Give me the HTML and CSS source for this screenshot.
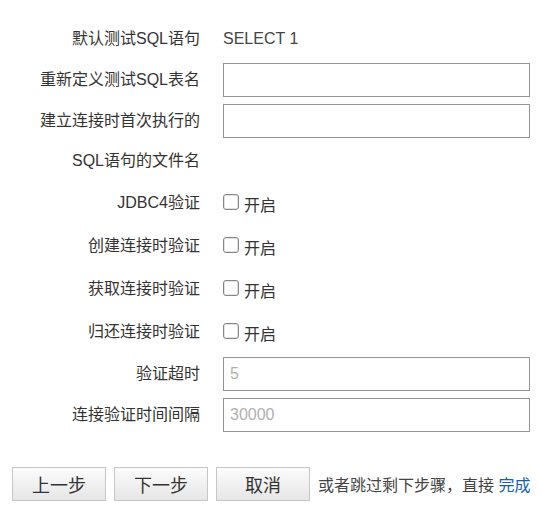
FILE: index.html
```html
<!DOCTYPE html>
<html lang="zh-CN">
<head>
<meta charset="utf-8">
<title>连接验证设置</title>
<link rel="stylesheet" href="styles.css">
</head>
<body>
<div class="page">
  <div class="form">
    <div class="label">默认测试SQL语句</div>
    <div class="value text">SELECT 1</div>

    <div class="label">重新定义测试SQL表名</div>
    <div class="value"><input class="field" type="text"></div>

    <div class="label">建立连接时首次执行的SQL语句的文件名</div>
    <div class="value"><input class="field" type="text"></div>

    <div class="label check-label">JDBC4验证</div>
    <div class="value check"><span class="box"></span><span class="check-text">开启</span></div>

    <div class="label check-label">创建连接时验证</div>
    <div class="value check"><span class="box"></span><span class="check-text">开启</span></div>

    <div class="label check-label">获取连接时验证</div>
    <div class="value check"><span class="box"></span><span class="check-text">开启</span></div>

    <div class="label check-label">归还连接时验证</div>
    <div class="value check"><span class="box"></span><span class="check-text">开启</span></div>

    <div class="label">验证超时</div>
    <div class="value"><input class="field" type="text" placeholder="5"></div>

    <div class="label">连接验证时间间隔</div>
    <div class="value"><input class="field" type="text" placeholder="30000"></div>
  </div>

  <div class="actions">
    <button class="btn" type="button">上一步</button>
    <button class="btn" type="button">下一步</button>
    <button class="btn" type="button">取消</button>
    <span class="skip">或者跳过剩下步骤，直接 <a class="finish" href="#">完成</a></span>
  </div>
</div>
</body>
</html>
```

FILE: styles.css
```css
html, body {
  margin: 0;
  padding: 0;
  background: #ffffff;
}

body {
  margin: 8px;
  font-family: "Liberation Sans", "Noto Sans CJK SC", sans-serif;
  font-size: 16px;
  color: #333333;
}

.page {
  padding-top: 11px;
}

.form {
  display: grid;
  grid-template-columns: 192px 307px;
  column-gap: 23px;
  row-gap: 1px;
}

.label {
  justify-self: end;
  width: 165px;
  text-align: right;
  line-height: 40px;
  color: #333333;
}

.check-label {
  line-height: 42px;
}

.value {
  min-height: 40px;
}

.text {
  line-height: 40px;
  color: #444444;
}

.field {
  display: block;
  box-sizing: border-box;
  width: 307px;
  height: 34px;
  margin: 3px 0 0 0;
  padding: 0 6px;
  border: 1px solid #949494;
  border-radius: 0;
  font-family: "Liberation Sans", "Noto Sans CJK SC", sans-serif;
  font-size: 16px;
  color: #333333;
  outline: none;
}

.field::placeholder {
  color: #b0b0b0;
}

.check {
  display: flex;
  align-items: center;
  height: 42px;
}

.box {
  display: block;
  flex: none;
  box-sizing: border-box;
  width: 16px;
  height: 16px;
  margin: -3px 5px 0 0;
  border: 1px solid #858585;
  border-radius: 3px;
  background: #ffffff;
  box-shadow: inset 0 0 0 1px #e2e2e2;
}

.check-text {
  padding-top: 6px;
  line-height: 20px;
  color: #333333;
}

.actions {
  display: flex;
  align-items: center;
  gap: 8px;
  margin-top: 32px;
  padding-left: 4px;
}

.btn {
  box-sizing: border-box;
  width: 94px;
  height: 34px;
  margin: 0;
  padding: 0;
  border: 1px solid #c6c6c6;
  border-radius: 0;
  background: linear-gradient(#fcfcfc, #e6e6e6);
  font-family: "Liberation Sans", "Noto Sans CJK SC", sans-serif;
  font-size: 18px;
  color: #333333;
}

.skip {
  color: #444444;
  white-space: nowrap;
}

.finish {
  color: #1a5ea8;
  text-decoration: none;
}
```
